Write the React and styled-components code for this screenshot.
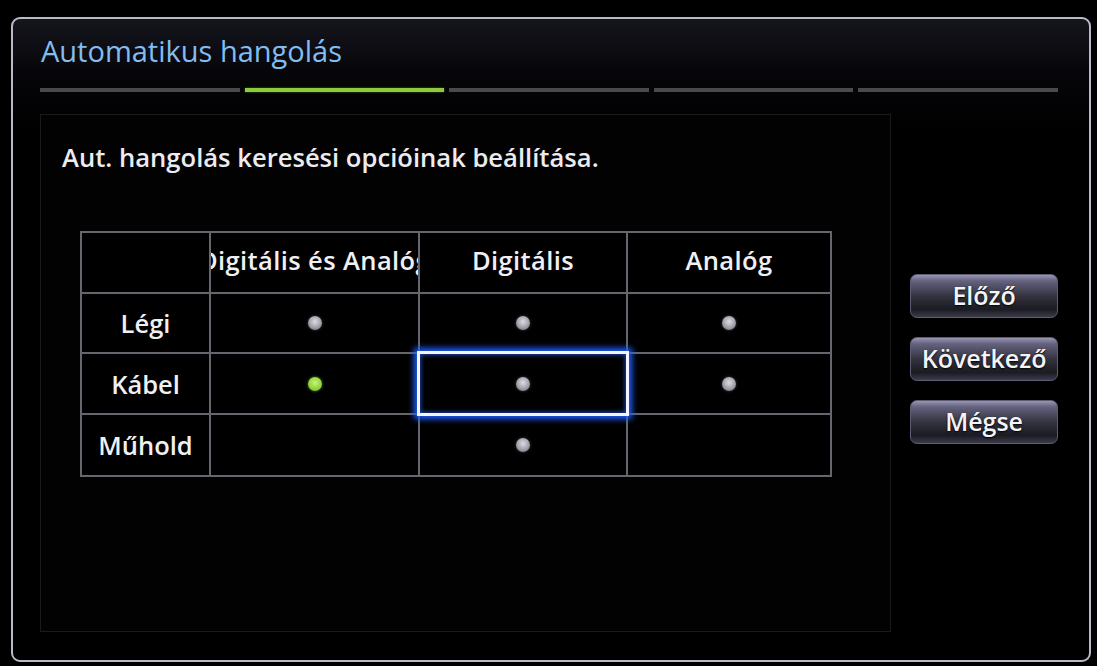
import React from 'react';
import styled, { createGlobalStyle, css } from 'styled-components';

const GlobalStyle = createGlobalStyle`
  html, body {
    margin: 0;
    padding: 0;
    background: #000;
  }
  body {
    font-family: "Open Sans", "Noto Sans", "DejaVu Sans", sans-serif;
    color: #f2f2f4;
  }
`;

const steps = [false, true, false, false, false];
const columns = ['Digitális és Analóg', 'Digitális', 'Analóg'];
const rows = [
  { label: 'Légi', cells: ['dot', 'dot', 'dot'] },
  { label: 'Kábel', cells: ['on', 'dot', 'dot'], focus: 1 },
  { label: 'Műhold', cells: [null, 'dot', null] },
];

function App() {
  return (
    <>
      <GlobalStyle />
      <Screen>
        <Frame>
          <Title>Automatikus hangolás</Title>
          <Steps>
            {steps.map((active, i) => (
              <Step key={i} $active={active} />
            ))}
          </Steps>
          <Body>
            <Panel>
              <Intro>Aut. hangolás keresési opcióinak beállítása.</Intro>
              <Grid>
                <Cell />
                {columns.map((c) => (
                  <HeadCell key={c}>
                    <span>{c}</span>
                  </HeadCell>
                ))}
                {rows.map((r) => (
                  <React.Fragment key={r.label}>
                    <Cell $label>{r.label}</Cell>
                    {r.cells.map((v, i) => (
                      <Cell key={i} $focus={r.focus === i}>
                        {v && <Dot $on={v === 'on'} />}
                      </Cell>
                    ))}
                  </React.Fragment>
                ))}
              </Grid>
            </Panel>
            <Actions>
              <Button>Előző</Button>
              <Button>Következő</Button>
              <Button>Mégse</Button>
            </Actions>
          </Body>
        </Frame>
      </Screen>
    </>
  );
}

export default App;

const Screen = styled.div`
  width: 1097px;
  height: 666px;
  padding: 17px 6px 4px 11px;
  box-sizing: border-box;
  background: #000;
`;

const Frame = styled.div`
  box-sizing: border-box;
  height: 645px;
  border: 2px solid #b9b9c8;
  border-radius: 9px;
  padding: 13px 31px 0 27px;
  background: linear-gradient(180deg, #15151d 0px, #07070b 50px, #000 110px);
  display: flex;
  flex-direction: column;
`;

const Title = styled.div`
  font-size: 29px;
  line-height: 38px;
  color: #82bdf2;
  padding-left: 1px;
`;

const Steps = styled.div`
  display: flex;
  gap: 5px;
  margin-top: 18px;
`;

const Step = styled.div`
  flex: 1;
  height: 4px;
  background: ${(p) => (p.$active ? '#8ccc3c' : '#4a4a4e')};
  ${(p) =>
    p.$active &&
    css`
      box-shadow: 0 0 2px rgba(160, 230, 80, 0.5);
    `}
`;

const Body = styled.div`
  display: flex;
  margin-top: 22px;
`;

const Panel = styled.div`
  width: 852px;
  height: 518px;
  box-sizing: border-box;
  border: 1px solid #1a1a1e;
  background: #020203;
  padding: 24px 0 0 21px;
`;

const Intro = styled.div`
  font-size: 25.6px;
  font-weight: 600;
  line-height: 38px;
  color: #ececf0;
`;

const Grid = styled.div`
  display: grid;
  grid-template-columns: 127px 207px 206px 202px;
  grid-template-rows: 59px 58px 59px 60px;
  gap: 2px;
  padding: 2px;
  width: max-content;
  background: #66666e;
  margin: 54px 0 0 18px;
`;

const Cell = styled.div`
  position: relative;
  background: #000;
  display: flex;
  align-items: center;
  justify-content: center;
  font-size: 25.5px;
  font-weight: 600;
  color: #f0f0f4;
  ${(p) =>
    p.$focus &&
    css`
      &::after {
        content: '';
        position: absolute;
        inset: -3px;
        border: 3px solid #f4f6ff;
        box-shadow: 0 0 6px 3px #1f5fff, inset 0 0 4px 1px rgba(40, 100, 255, 0.7);
        z-index: 1;
      }
    `}
`;

const HeadCell = styled(Cell)`
  overflow: hidden;
  white-space: nowrap;
  padding-bottom: 6px;
  box-sizing: border-box;
  letter-spacing: 0.4px;
`;

const Dot = styled.div`
  width: 14px;
  height: 14px;
  border-radius: 50%;
  background: ${(p) =>
    p.$on
      ? 'radial-gradient(circle at 50% 40%, #c6f37a 0%, #8ed338 60%, #5f9d20 100%)'
      : 'radial-gradient(circle at 50% 40%, #dcdce4 0%, #a0a0aa 55%, #60606a 100%)'};
  box-shadow: 0 0 3px ${(p) => (p.$on ? 'rgba(150,220,60,0.6)' : 'rgba(200,200,210,0.35)')};
`;

const Actions = styled.div`
  display: flex;
  flex-direction: column;
  gap: 19px;
  margin: 160px 0 0 19px;
  width: 148px;
`;

const Button = styled.div`
  height: 44px;
  box-sizing: border-box;
  border-radius: 7px;
  border: 1px solid #5e5c72;
  background: linear-gradient(180deg, #9896b2 0%, #64627e 14%, #34333f 50%, #1b1b22 82%, #3c3b4a 100%);
  display: flex;
  align-items: center;
  justify-content: center;
  padding-bottom: 3px;
  font-size: 25px;
  font-weight: 600;
  color: #f4f4f8;
  text-shadow: 0 1px 2px #000;
`;
